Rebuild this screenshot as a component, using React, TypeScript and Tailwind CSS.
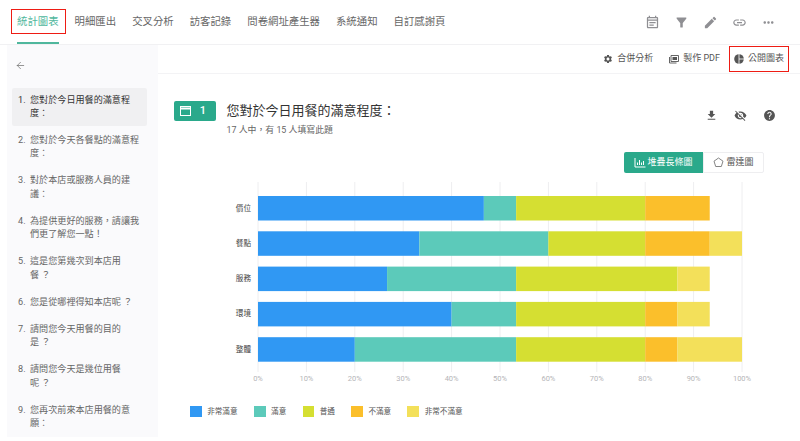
import React from "react";
import { ArrowLeft } from "lucide-react";
import {
  MdOutlineEventNote,
  MdFilterAlt,
  MdEdit,
  MdLink,
  MdMoreHoriz,
  MdSettings,
  MdFileDownload,
  MdVisibilityOff,
  MdHelp,
} from "react-icons/md";

const tabs = ["統計圖表", "明細匯出", "交叉分析", "訪客記錄", "問卷網址產生器", "系統通知", "自訂感謝頁"];

const questions = [
  "您對於今日用餐的滿意程度：",
  "您對於今天各餐點的滿意程度：",
  "對於本店或服務人員的建議：",
  "為提供更好的服務，請讓我們更了解您一點！",
  "這是您第幾次到本店用餐\u00a0？",
  "您是從哪裡得知本店呢\u00a0？",
  "請問您今天用餐的目的是\u00a0？",
  "請問您今天是幾位用餐呢\u00a0？",
  "您再次前來本店用餐的意願：",
];

const colors = ["#3098f3", "#5ccaba", "#d5df32", "#fbbf2b", "#f3e05a"];
const legend = ["非常滿意", "滿意", "普通", "不滿意", "非常不滿意"];

// answers out of 15
const rows = [
  { name: "價位", values: [7, 1, 4, 2, 0] },
  { name: "餐點", values: [5, 4, 3, 2, 1] },
  { name: "服務", values: [4, 4, 5, 0, 1] },
  { name: "環境", values: [6, 2, 4, 1, 1] },
  { name: "整體", values: [3, 5, 4, 1, 2] },
];

const X0 = 58;
const W = 484;

function Chart() {
  return (
    <svg width="600" height="206" className="block" style={{ fontFamily: "inherit" }}>
      {Array.from({ length: 11 }).map((_, i) => {
        const x = X0 + (W * i) / 10;
        return (
          <g key={i}>
            <line x1={x} x2={x} y1={3} y2={193} stroke="#eeeef0" strokeWidth="1" />
            <text x={x} y={202} textAnchor="middle" fontSize="7.5" fill="#b5b5b8">
              {i * 10}%
            </text>
          </g>
        );
      })}
      {rows.map((row, r) => {
        const y = 17 + r * 35.3;
        let acc = 0;
        return (
          <g key={row.name}>
            <text x={51} y={y + 14.5} textAnchor="end" fontSize="7.6" fill="#444">
              {row.name}
            </text>
            {row.values.map((v, i) => {
              const x = X0 + (W * acc) / 15;
              acc += v;
              return <rect key={i} x={x} y={y} width={(W * v) / 15} height={24.5} fill={colors[i]} />;
            })}
          </g>
        );
      })}
    </svg>
  );
}

function SlideIcon() {
  return (
    <svg width="10" height="10" viewBox="0 0 10 10" fill="none" stroke="#555" strokeWidth="0.9">
      <path d="M2 1.5h7.5v6H2z" />
      <path d="M3.5 3h4.5v3H3.5z" fill="#555" stroke="none" />
      <path d="M0.5 3v6h7" />
    </svg>
  );
}

function PublicIcon() {
  return (
    <svg width="10" height="10" viewBox="0 0 10 10" fill="#555">
      <circle cx="5" cy="5" r="4.8" />
      <path d="M4.6 0h0.8v10h-0.8z" fill="#fff" />
      <path d="M5 4.6h5v0.8h-5z" fill="#fff" />
    </svg>
  );
}

export default function App() {
  return (
    <div
      className="w-[800px] h-[441px] overflow-hidden bg-white text-[#555]"
      style={{ fontFamily: 'Roboto, "Noto Sans CJK TC", sans-serif' }}
    >
      <div className="h-[45px] flex items-center pl-[17px] pr-[24px] border-b border-[#f1f1f3]">
        <div className="flex gap-[16px] h-full">
          {tabs.map((tab, i) => (
            <div
              key={tab}
              className={
                i === 0
                  ? "relative flex items-center text-[10.4px] text-[#4fb79d]"
                  : "flex items-center text-[10.4px] text-[#666]"
              }
            >
              {tab}
              {i === 0 && (
                <>
                  <span className="absolute left-0 right-0 bottom-0 h-[2px] bg-[#4fb79d]" />
                  <span className="absolute left-[-6px] right-[-7px] top-[9px] h-[25px] border-[1.5px] border-[#ee1c14]" />
                </>
              )}
            </div>
          ))}
        </div>
        <div className="ml-auto flex items-center gap-[14px] text-[#8f8f93]">
          <MdOutlineEventNote size={15} />
          <MdFilterAlt size={15} />
          <MdEdit size={15} />
          <MdLink size={15} />
          <MdMoreHoriz size={15} />
        </div>
      </div>

      <div className="flex">
        <div className="ml-[7px] w-[151px] h-[392px] bg-[#fafafc] shrink-0">
          <div className="pl-[8px] pt-[15px] h-[43px]">
            <ArrowLeft size={11} strokeWidth={1.5} className="text-[#666]" />
          </div>
          <div className="pl-[5px] pr-[11px]">
            {questions.map((q, i) => (
              <div
                key={q}
                className={
                  i === 0
                    ? "flex px-[6px] py-[5.5px] mb-[1px] bg-[#f0f0f2] rounded-[2px] text-[9.1px] leading-[13.5px] text-[#333]"
                    : "flex px-[6px] py-[6.75px] text-[9.1px] leading-[13.5px] text-[#666]"
                }
              >
                <span className="w-[12px] shrink-0">{i + 1}.</span>
                <span className="flex-1">{q}</span>
              </div>
            ))}
          </div>
        </div>

        <div className="flex-1 min-w-0">
          <div className="h-[29px] flex items-center justify-end pr-[11px] border-b border-[#f3f3f5] text-[9px] text-[#555]">
            <div className="flex items-center gap-[4px] mr-[16px]">
              <MdSettings size={10} />
              合併分析
            </div>
            <div className="flex items-center gap-[4px] mr-[9px]">
              <SlideIcon />
              製作 PDF
            </div>
            <div className="flex items-center justify-center gap-[4px] w-[60px] h-[26px] border-[1.5px] border-[#ee1c14]">
              <PublicIcon />
              公開圖表
            </div>
          </div>

          <div className="flex pt-[27px] pl-[16px] pr-[24px]">
            <div className="w-[42px] h-[20px] bg-[#2aa98b] rounded-[2px] text-white flex items-center justify-between pl-[6px] pr-[10px] text-[11px] font-medium">
              <svg width="11" height="10" viewBox="0 0 11 10" fill="none" stroke="#fff" strokeWidth="1">
                <rect x="0.5" y="0.5" width="10" height="9" />
                <path d="M0.5 2.5h10" strokeWidth="2" />
              </svg>
              1
            </div>
            <div className="ml-[10.5px]">
              <div className="text-[13px] leading-[20px] text-[#333]">{questions[0]}</div>
              <div className="mt-[2px] text-[8.9px] leading-[14px] text-[#666]">17 人中，有 15 人填寫此題</div>
            </div>
            <div className="ml-auto flex items-center gap-[16px] h-[29px] text-[#555]">
              <MdFileDownload size={13} />
              <MdVisibilityOff size={13} />
              <MdHelp size={13} />
            </div>
          </div>

          <div className="mt-[15px] pr-[36px] flex justify-end">
            <div className="h-[21px] w-[79px] bg-[#2aa98b] rounded-l-[2px] text-white text-[9px] flex items-center justify-center gap-[1px]">
              <svg width="12" height="11" viewBox="0 0 12 11" fill="none" stroke="currentColor">
                <path d="M1 1v9h10.5" />
                <path d="M3.5 8V5.5M5.5 8V3M7.5 8V5.5M9.5 8V4" />
              </svg>
              堆疊長條圖
            </div>
            <div className="h-[21px] w-[61px] border border-[#eeeef0] rounded-r-[2px] text-[#555] text-[9px] flex items-center justify-center gap-[2px]">
              <svg width="11" height="11" viewBox="0 0 11 11" fill="none" stroke="#666" strokeWidth="0.8">
                <path d="M5.5 1l4.5 3.2-1.7 5.3H2.7L1 4.2z" />
              </svg>
              雷達圖
            </div>
          </div>

          <div className="ml-[42px] mt-[6px]">
            <Chart />
          </div>

          <div className="mt-[20.5px] pl-[32px] flex items-center gap-[16.3px] text-[7.6px] text-[#555]">
            {legend.map((label, i) => (
              <div key={label} className="flex items-center gap-[5.5px]">
                <span className="w-[11.7px] h-[11.7px]" style={{ backgroundColor: colors[i] }} />
                {label}
              </div>
            ))}
          </div>
        </div>
      </div>
    </div>
  );
}
